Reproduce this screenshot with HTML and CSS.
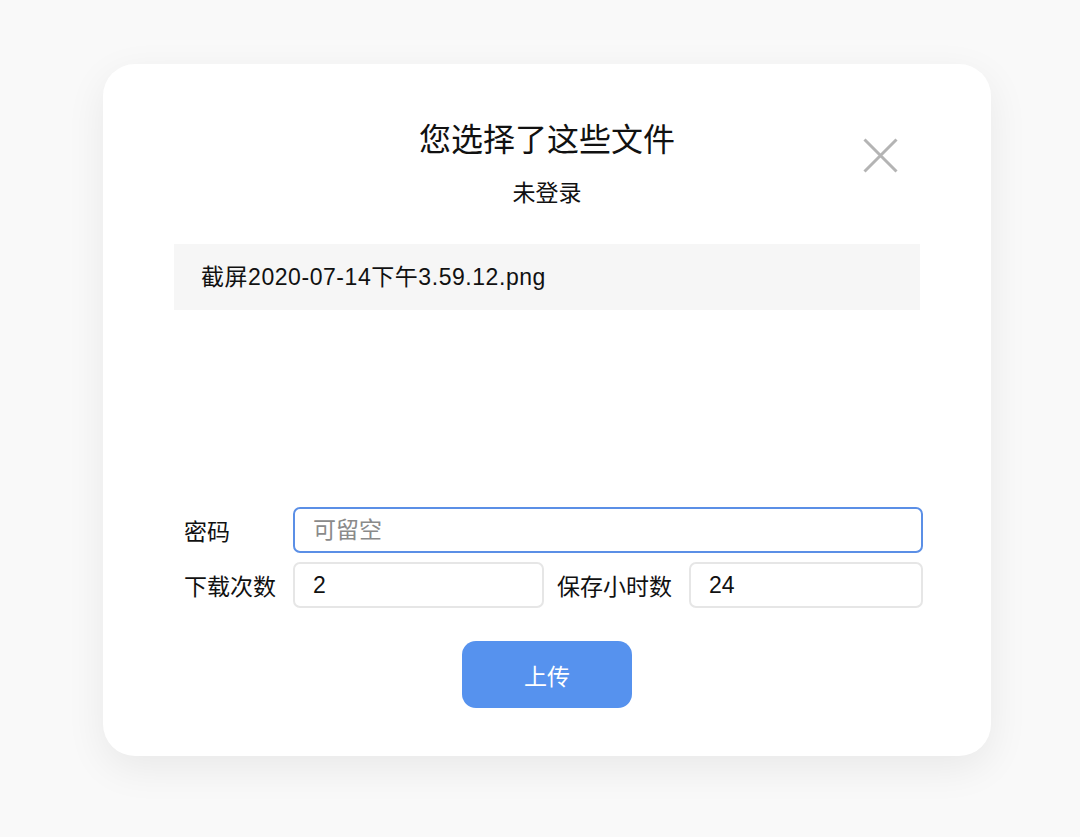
FILE: index.html
```html
<!DOCTYPE html>
<html lang="zh-CN">
<head>
    <meta charset="UTF-8">
    <title>上传文件</title>
    <link rel="stylesheet" href="styles.css">
</head>
<body>
    <div class="dialog">
        <button class="close-btn" aria-label="关闭">
            <svg width="35" height="35" viewBox="0 0 35 35">
                <path d="M1.5 1.5 L33.5 33.5 M33.5 1.5 L1.5 33.5" stroke="#b4b4b4" stroke-width="3" fill="none"/>
            </svg>
        </button>

        <h1 class="title">您选择了这些文件</h1>
        <p class="user-status">未登录</p>

        <div class="file-list">
            <div class="file-item">截屏2020-07-14下午3.59.12.png</div>
        </div>

        <div class="upload-form">
            <div class="form-row">
                <label class="field-label" for="password">密码</label>
                <input id="password" class="field-input focused" type="text" placeholder="可留空">
            </div>
            <div class="form-row">
                <label class="field-label" for="downloads">下载次数</label>
                <input id="downloads" class="field-input short" type="text" value="2">
                <label class="field-label second" for="hours">保存小时数</label>
                <input id="hours" class="field-input" type="text" value="24">
            </div>
            <div class="actions">
                <button class="upload-btn">上传</button>
            </div>
        </div>
    </div>
</body>
</html>
```

FILE: styles.css
```css
html, body {
    margin: 0;
    padding: 0;
    background: #f9f9f9;
}

body {
    font-family: "Liberation Sans", "Noto Sans CJK SC", sans-serif;
    color: #111;
    height: 837px;
    overflow: hidden;
}

.dialog {
    position: relative;
    width: 888px;
    box-sizing: border-box;
    margin: 64px 0 0 103px;
    padding: 54px 71px 48px;
    background: #fff;
    border-radius: 32px;
    box-shadow: 0 12px 40px rgba(0, 0, 0, 0.07);
}

.close-btn {
    position: absolute;
    top: 74px;
    right: 93px;
    padding: 0;
    border: none;
    background: none;
    cursor: pointer;
    line-height: 0;
}

.title {
    margin: 0;
    font-size: 32px;
    font-weight: normal;
    line-height: 44px;
    text-align: center;
}

.user-status {
    margin: 15px 0 0;
    font-size: 23px;
    line-height: 32px;
    text-align: center;
}

.file-list {
    margin-top: 35px;
    height: 263px;
}

.file-item {
    height: 66px;
    line-height: 66px;
    padding: 0 27px;
    background: #f6f6f6;
    font-size: 23px;
    letter-spacing: 0.55px;
}

.upload-form {
    padding-left: 10px;
    margin-right: -3px;
}

.form-row {
    display: flex;
    align-items: center;
    margin-bottom: 9px;
}

.field-label {
    width: 109px;
    flex-shrink: 0;
    font-size: 23px;
}

.field-label.second {
    width: auto;
    margin: 0 17px 0 13px;
}

.field-input {
    flex: 1;
    min-width: 0;
    height: 46px;
    box-sizing: border-box;
    padding: 0 18px;
    border: 2px solid #e6e6e6;
    border-radius: 7px;
    font-family: inherit;
    font-size: 23px;
    color: #111;
    outline: none;
}

.field-input.short {
    flex: 0 0 251px;
}

.field-input.focused {
    border-color: #5b8fe6;
}

.field-input::placeholder {
    color: #8a8a8a;
}

.actions {
    display: flex;
    justify-content: center;
    margin-top: 33px;
}

.upload-btn {
    width: 170px;
    height: 67px;
    border: none;
    border-radius: 14px;
    background: #5692ee;
    color: #fff;
    font-family: inherit;
    font-size: 23px;
    cursor: pointer;
    margin-left: -13px;
}
```
